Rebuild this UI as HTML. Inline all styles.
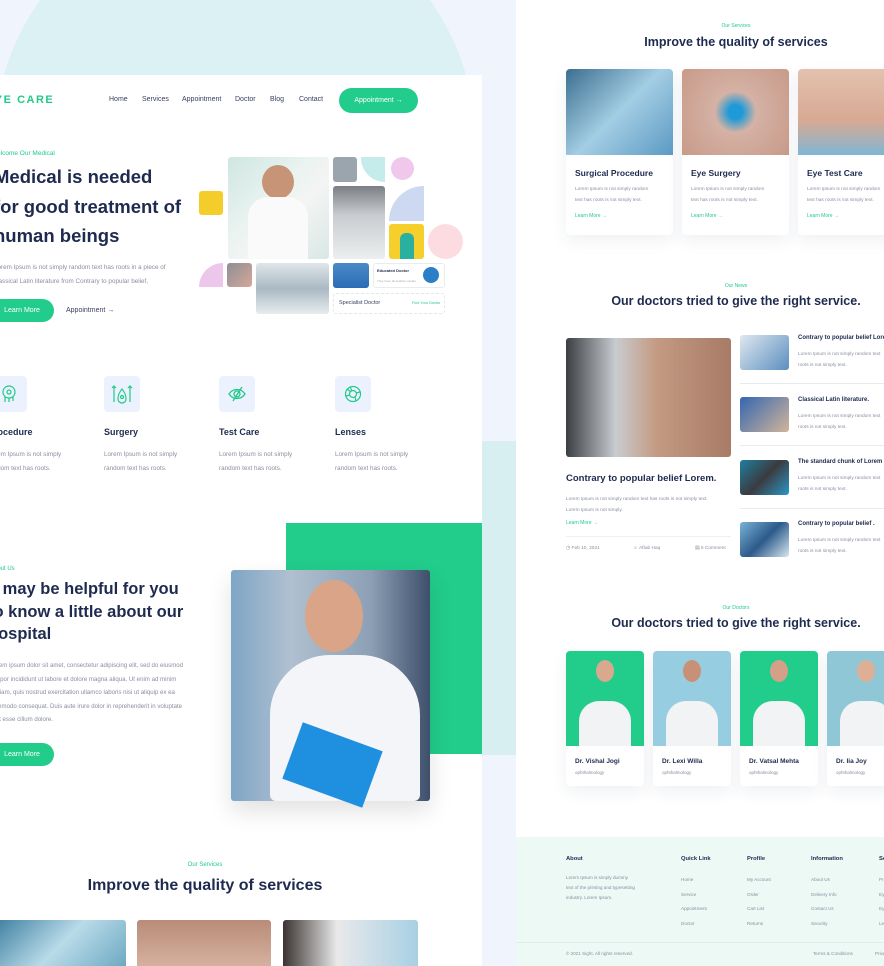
<!DOCTYPE html>
<html><head><meta charset="utf-8"><style>
*{margin:0;padding:0;box-sizing:border-box}
body{width:884px;height:966px;overflow:hidden;background:#f0f5fd;font-family:"Liberation Sans",sans-serif;position:relative;color:#1e2a4f}
.a{position:absolute;white-space:nowrap}
.g{color:#22c98a}
.nv{color:#1e2a4f;font-weight:bold}
.gr{color:#8a8f9f}
.btn{position:absolute;background:#22cc8a;color:#fff;border-radius:13px;font-size:7px;display:flex;align-items:center;justify-content:center}
.panel{position:absolute;background:#fff;overflow:hidden}
.ib{position:absolute;width:36px;height:36px;background:#ecf2fd;border-radius:4px}
.card{position:absolute;background:#fff;border-radius:4px;box-shadow:0 6px 16px rgba(30,50,100,.07);overflow:hidden}
.img{position:absolute;border-radius:3px}
</style></head><body>
<div class="a" style="left:-5px;top:-100px;width:480px;height:480px;border-radius:50%;background:#dcf1f4"></div>
<div class="a" style="left:482px;top:441px;width:34px;height:314px;background:#d7eff0"></div>

<!-- LEFT PANEL -->
<div class="panel" style="left:0;top:75px;width:482px;height:891px">
<div class="a" style="left:-14px;top:19px;font-size:11px;font-weight:bold;letter-spacing:1.5px;color:#22c98a">EYE CARE</div>
<div class="a" style="left:109px;top:21px;font-size:7px;color:#3a4060">Home</div>
<div class="a" style="left:142px;top:21px;font-size:7px;color:#3a4060">Services</div>
<div class="a" style="left:182px;top:21px;font-size:7px;color:#3a4060">Appointment</div>
<div class="a" style="left:235px;top:21px;font-size:7px;color:#3a4060">Doctor</div>
<div class="a" style="left:270px;top:21px;font-size:7px;color:#3a4060">Blog</div>
<div class="a" style="left:299px;top:21px;font-size:7px;color:#3a4060">Contact</div>
<div class="btn" style="left:339px;top:13px;width:79px;height:25px">Appointment &rarr;</div>

<div class="a g" style="left:-9px;top:75px;font-size:6.5px">Welcome Our Medical</div>
<div class="a nv" style="left:-6px;top:87px;font-size:18.5px;line-height:29.5px">Medical is needed<br>for good treatment of<br>human beings</div>
<div class="a gr" style="left:-6px;top:186px;font-size:6.3px;line-height:14px">Lorem Ipsum is not simply random text has roots in a piece of<br>classical Latin literature from Contrary to popular belief,</div>
<div class="btn" style="left:-10px;top:224px;width:64px;height:23px">Learn More</div>
<div class="a" style="left:66px;top:232px;font-size:7px;color:#3a4060">Appointment &rarr;</div>

<!-- collage -->
<div class="img" style="left:228px;top:82px;width:101px;height:102px;background:linear-gradient(135deg,#cfe6e2,#e9f3f0 40%,#f4f4f4 60%,#d8e8e4)"></div>
<div class="a" style="left:262px;top:90px;width:32px;height:34px;border-radius:50%;background:#c89478"></div>
<div class="a" style="left:248px;top:122px;width:60px;height:62px;border-radius:20px 20px 0 0;background:#fafafa"></div>
<div class="img" style="left:333px;top:82px;width:24px;height:25px;background:#9aa5ad"></div>
<div class="a" style="left:361px;top:82px;width:24px;height:25px;background:#c5ecea;border-radius:0 0 0 24px"></div>
<div class="a" style="left:391px;top:82px;width:23px;height:23px;background:#efc8ec;border-radius:50%"></div>
<div class="img" style="left:333px;top:111px;width:52px;height:73px;background:linear-gradient(180deg,#7b7f83,#c9ccd0 40%,#eceeef)"></div>
<div class="a" style="left:389px;top:111px;width:35px;height:35px;background:#cdd8f1;border-radius:35px 0 0 0"></div>
<div class="img" style="left:389px;top:149px;width:35px;height:35px;background:#f5d02c"></div>
<div class="a" style="left:400px;top:158px;width:14px;height:26px;background:#2ab0a0;border-radius:6px 6px 0 0"></div>
<div class="a" style="left:428px;top:149px;width:35px;height:35px;background:#fddce1;border-radius:50%"></div>
<div class="img" style="left:199px;top:116px;width:24px;height:24px;background:#f5cd2a"></div>
<div class="a" style="left:199px;top:188px;width:24px;height:24px;background:#edc6ec;border-radius:24px 0 0 0"></div>
<div class="img" style="left:227px;top:188px;width:25px;height:24px;background:linear-gradient(135deg,#8d8f95,#d7a79a)"></div>
<div class="img" style="left:256px;top:188px;width:73px;height:51px;background:linear-gradient(180deg,#dfe6ea,#aab9c4 50%,#e7ecee)"></div>
<div class="img" style="left:333px;top:188px;width:36px;height:25px;background:linear-gradient(180deg,#4a8ac8,#2a6db5)"></div>
<div class="img" style="left:373px;top:188px;width:72px;height:25px;border:1px solid #e8ecf2;background:#fff">
<div class="a" style="left:3px;top:4px;font-size:4px;font-weight:bold">Educated Doctor</div>
<div class="a" style="left:3px;top:15px;font-size:3px;color:#aaa">They have all studied outside</div>
<div class="a" style="left:49px;top:3px;width:16px;height:16px;border-radius:50%;background:#2b7fc6"></div></div>
<div class="img" style="left:333px;top:218px;width:112px;height:21px;border:1px dashed #e2e6ee;background:#fff">
<div class="a" style="left:5px;top:6px;font-size:5.5px;color:#3a4060">Specialist Doctor</div>
<div class="a g" style="left:78px;top:7px;font-size:3.8px">Find Your Doctor</div></div>

<!-- features -->
<div class="ib" style="left:-9px;top:301px"></div>
<div class="ib" style="left:104px;top:301px"></div>
<div class="ib" style="left:219px;top:301px"></div>
<div class="ib" style="left:335px;top:301px"></div>
<svg class="a" style="left:0;top:309px" width="20" height="20" fill="none" stroke="#22c98a" stroke-width="1.2"><circle cx="9" cy="8" r="6"/><circle cx="9" cy="8" r="2"/><path d="M5 13v5M9 14v4M13 13v4"/></svg>
<svg class="a" style="left:110px;top:309px" width="24" height="20" fill="none" stroke="#22c98a" stroke-width="1.2"><path d="M2 4l2-2 2 2M4 2v16M18 4l2-2 2 2M20 2v16M12 5c-4 5-4 8-4 10a4 4 0 008 0c0-2 0-5-4-10z"/><circle cx="12" cy="13" r="1.5"/></svg>
<svg class="a" style="left:227px;top:309px" width="20" height="20" fill="none" stroke="#22c98a" stroke-width="1.3"><path d="M2 10c4-6 12-6 16 0-4 6-12 6-16 0z"/><circle cx="10" cy="10" r="3"/><path d="M15 3L6 17"/></svg>
<svg class="a" style="left:343px;top:309px" width="20" height="20" fill="none" stroke="#22c98a" stroke-width="1.2"><circle cx="10" cy="10" r="7.5"/><circle cx="10" cy="10" r="3.5"/><path d="M7 3l2 4M17 8l-4 1M13 17l-1-4M3 12l4-1M4 5l4 3"/></svg>
<div class="a nv" style="left:-12px;top:352px;font-size:9px">Procedure</div>
<div class="a nv" style="left:104px;top:352px;font-size:9px">Surgery</div>
<div class="a nv" style="left:219px;top:352px;font-size:9px">Test Care</div>
<div class="a nv" style="left:335px;top:352px;font-size:9px">Lenses</div>
<div class="a gr" style="left:-12px;top:373px;font-size:6.3px;line-height:13.5px">Lorem Ipsum is not simply<br>random text has roots.</div>
<div class="a gr" style="left:104px;top:373px;font-size:6.3px;line-height:13.5px">Lorem Ipsum is not simply<br>random text has roots.</div>
<div class="a gr" style="left:219px;top:373px;font-size:6.3px;line-height:13.5px">Lorem Ipsum is not simply<br>random text has roots.</div>
<div class="a gr" style="left:335px;top:373px;font-size:6.3px;line-height:13.5px">Lorem Ipsum is not simply<br>random text has roots.</div>

<!-- about -->
<div class="a" style="left:286px;top:448px;width:196px;height:231px;background:#22cc8a"></div>
<div class="img" style="left:231px;top:495px;width:199px;height:231px;box-shadow:0 10px 24px rgba(0,0,0,.12);background:linear-gradient(90deg,#7fa5c6,#b0c0d0 30%,#8da0b5 70%,#3d4f6a)"></div>
<div class="a" style="left:270px;top:580px;width:150px;height:146px;border-radius:60px 60px 6px 6px;background:#f3f5f8"></div>
<div class="a" style="left:305px;top:505px;width:58px;height:72px;border-radius:50%;background:#d9a488"></div>
<div class="a" style="left:290px;top:660px;width:85px;height:60px;background:#1f8fe0;transform:rotate(20deg)"></div>
<div class="a g" style="left:-10px;top:491px;font-size:6px">About Us</div>
<div class="a nv" style="left:-12px;top:503px;font-size:16.5px;line-height:22.5px">It may be helpful for you<br>to know a little about our<br>hospital</div>
<div class="a gr" style="left:-10px;top:584px;font-size:6.1px;line-height:13.5px">Lorem ipsum dolor sit amet, consectetur adipiscing elit, sed do eiusmod<br>tempor incididunt ut labore et dolore magna aliqua. Ut enim ad minim<br>veniam, quis nostrud exercitation ullamco laboris nisi ut aliquip ex ea<br>commodo consequat. Duis aute irure dolor in reprehenderit in voluptate<br>velit esse cillum dolore.</div>
<div class="btn" style="left:-10px;top:668px;width:64px;height:23px">Learn More</div>

<div class="a g" style="left:0;width:410px;text-align:center;top:787px;font-size:6px">Our Services</div>
<div class="a nv" style="left:0;width:410px;text-align:center;top:802px;font-size:16px">Improve the quality of services</div>
<div class="img" style="left:-5px;top:845px;width:131px;height:50px;background:linear-gradient(135deg,#3d7ea0,#b9dbe8 50%,#6aa7c0)"></div>
<div class="img" style="left:137px;top:845px;width:134px;height:50px;background:linear-gradient(180deg,#b98c78,#d8b3a2)"></div>
<div class="img" style="left:283px;top:845px;width:135px;height:50px;background:linear-gradient(90deg,#3a3330,#e9e9ea 40%,#a7d0e4)"></div>
</div>

<!-- RIGHT PANEL -->
<div class="panel" style="left:516px;top:0;width:368px;height:966px">
<div class="a g" style="left:0;width:440px;text-align:center;top:23px;font-size:5px">Our Services</div>
<div class="a nv" style="left:0;width:440px;text-align:center;top:35px;font-size:12.5px">Improve the quality of services</div>

<div class="card" style="left:50px;top:69px;width:107px;height:166px"><div class="a" style="left:0;top:0;width:107px;height:86px;background:linear-gradient(135deg,#3b6f90,#a3cde3 50%,#5c9ac4)"></div>
<div class="a nv" style="left:9px;top:99px;font-size:8.5px">Surgical Procedure</div>
<div class="a gr" style="left:9px;top:116px;font-size:4.8px;line-height:10.5px">Lorem Ipsum is not simply random<br>text has roots is not simply text.</div>
<div class="a g" style="left:9px;top:144px;font-size:5px">Learn More &rarr;</div></div>
<div class="card" style="left:166px;top:69px;width:107px;height:166px"><div class="a" style="left:0;top:0;width:107px;height:86px;background:radial-gradient(circle at 50% 50%,#1e9ad8 10%,#d4b2a5 30%,#c89a88)"></div>
<div class="a nv" style="left:9px;top:99px;font-size:8.5px">Eye Surgery</div>
<div class="a gr" style="left:9px;top:116px;font-size:4.8px;line-height:10.5px">Lorem Ipsum is not simply random<br>text has roots is not simply text.</div>
<div class="a g" style="left:9px;top:144px;font-size:5px">Learn More &rarr;</div></div>
<div class="card" style="left:282px;top:69px;width:107px;height:166px"><div class="a" style="left:0;top:0;width:107px;height:86px;background:linear-gradient(180deg,#e2c2ae,#d8a993 60%,#7fb6d4)"></div>
<div class="a nv" style="left:9px;top:99px;font-size:8.5px">Eye Test Care</div>
<div class="a gr" style="left:9px;top:116px;font-size:4.8px;line-height:10.5px">Lorem Ipsum is not simply random<br>text has roots is not simply text.</div>
<div class="a g" style="left:9px;top:144px;font-size:5px">Learn More &rarr;</div></div>

<div class="a g" style="left:0;width:440px;text-align:center;top:283px;font-size:5px">Our News</div>
<div class="a nv" style="left:0;width:440px;text-align:center;top:294px;font-size:12.5px">Our doctors tried to give the right service.</div>
<div class="img" style="left:50px;top:338px;width:165px;height:119px;background:linear-gradient(90deg,#3b3f44,#c8ccd0 30%,#c49a82 55%,#a77b66)"></div>
<div class="a nv" style="left:50px;top:473px;font-size:9.5px">Contrary to popular belief Lorem.</div>
<div class="a gr" style="left:50px;top:495px;font-size:4.8px;line-height:10.5px">Lorem Ipsum is not simply random text has roots is not simply text.<br>Lorem Ipsum is not simply.</div>
<div class="a g" style="left:50px;top:520px;font-size:5px">Learn More &rarr;</div>
<div class="a" style="left:50px;top:536px;width:165px;height:1px;background:#edf0f4"></div>
<div class="a gr" style="left:50px;top:546px;font-size:4.8px">&#9719; Feb 10, 2021</div>
<div class="a gr" style="left:117px;top:546px;font-size:4.8px">&#9786; Aftab Haq</div>
<div class="a gr" style="left:179px;top:546px;font-size:4.8px">&#9636; 5 Comment</div>

<div class="img" style="left:224px;top:335px;width:49px;height:35px;background:linear-gradient(135deg,#dfe8ef,#5b8ec0)"></div>
<div class="img" style="left:224px;top:397px;width:49px;height:35px;background:linear-gradient(135deg,#3466b0,#d1b59a)"></div>
<div class="img" style="left:224px;top:460px;width:49px;height:35px;background:linear-gradient(135deg,#1e7fa0,#3b3b40 50%,#2a98c7)"></div>
<div class="img" style="left:224px;top:522px;width:49px;height:35px;background:linear-gradient(135deg,#7ab3d6,#2c5a8a 50%,#d8e7f0)"></div>
<div class="a nv" style="left:282px;top:335px;font-size:6px">Contrary to popular belief Lorem</div>
<div class="a nv" style="left:282px;top:397px;font-size:6px">Classical Latin literature.</div>
<div class="a nv" style="left:282px;top:459px;font-size:6px">The standard chunk of Lorem</div>
<div class="a nv" style="left:282px;top:521px;font-size:6px">Contrary to popular belief .</div>
<div class="a gr" style="left:282px;top:350px;font-size:4.8px;line-height:10.5px">Lorem Ipsum is not simply random text<br>roots is not simply text.</div>
<div class="a gr" style="left:282px;top:412px;font-size:4.8px;line-height:10.5px">Lorem Ipsum is not simply random text<br>roots is not simply text.</div>
<div class="a gr" style="left:282px;top:474px;font-size:4.8px;line-height:10.5px">Lorem Ipsum is not simply random text<br>roots is not simply text.</div>
<div class="a gr" style="left:282px;top:536px;font-size:4.8px;line-height:10.5px">Lorem Ipsum is not simply random text<br>roots is not simply text.</div>
<div class="a" style="left:224px;top:383px;width:150px;height:1px;background:#e6ebf2"></div>
<div class="a" style="left:224px;top:445px;width:150px;height:1px;background:#e6ebf2"></div>
<div class="a" style="left:224px;top:508px;width:150px;height:1px;background:#e6ebf2"></div>

<div class="a g" style="left:0;width:440px;text-align:center;top:605px;font-size:5px">Our Doctors</div>
<div class="a nv" style="left:0;width:440px;text-align:center;top:616px;font-size:12.5px">Our doctors tried to give the right service.</div>
<div class="card" style="left:50px;top:651px;width:78px;height:135px"><div class="a" style="left:0;top:0;width:78px;height:95px;background:#22cc8a"></div><div class="a" style="left:13px;top:50px;width:52px;height:45px;border-radius:20px 20px 0 0;background:#f2f3f5"></div><div class="a" style="left:30px;top:9px;width:18px;height:22px;border-radius:50%;background:#d9a98f"></div><div class="a nv" style="left:9px;top:107px;font-size:6.5px">Dr. Vishal Jogi</div><div class="a gr" style="left:9px;top:119px;font-size:4.5px">ophthalmology</div></div>
<div class="card" style="left:137px;top:651px;width:78px;height:135px"><div class="a" style="left:0;top:0;width:78px;height:95px;background:#97cde0"></div><div class="a" style="left:13px;top:50px;width:52px;height:45px;border-radius:20px 20px 0 0;background:#f2f3f5"></div><div class="a" style="left:30px;top:9px;width:18px;height:22px;border-radius:50%;background:#c99078"></div><div class="a nv" style="left:9px;top:107px;font-size:6.5px">Dr. Lexi Willa</div><div class="a gr" style="left:9px;top:119px;font-size:4.5px">ophthalmology</div></div>
<div class="card" style="left:224px;top:651px;width:78px;height:135px"><div class="a" style="left:0;top:0;width:78px;height:95px;background:#22cc8a"></div><div class="a" style="left:13px;top:50px;width:52px;height:45px;border-radius:20px 20px 0 0;background:#f2f3f5"></div><div class="a" style="left:30px;top:9px;width:18px;height:22px;border-radius:50%;background:#d4a087"></div><div class="a nv" style="left:9px;top:107px;font-size:6.5px">Dr. Vatsal Mehta</div><div class="a gr" style="left:9px;top:119px;font-size:4.5px">ophthalmology</div></div>
<div class="card" style="left:311px;top:651px;width:78px;height:135px"><div class="a" style="left:0;top:0;width:78px;height:95px;background:#8fc7d6"></div><div class="a" style="left:13px;top:50px;width:52px;height:45px;border-radius:20px 20px 0 0;background:#f2f3f5"></div><div class="a" style="left:30px;top:9px;width:18px;height:22px;border-radius:50%;background:#dcaf96"></div><div class="a nv" style="left:9px;top:107px;font-size:6.5px">Dr. Iia Joy</div><div class="a gr" style="left:9px;top:119px;font-size:4.5px">ophthalmology</div></div>

<div class="a" style="left:0;top:837px;width:368px;height:129px;background:#ecf9f5"></div>
<div class="a nv" style="left:50px;top:856px;font-size:5.8px">About</div>
<div class="a nv" style="left:165px;top:856px;font-size:5.8px">Quick Link</div>
<div class="a nv" style="left:231px;top:856px;font-size:5.8px">Profile</div>
<div class="a nv" style="left:295px;top:856px;font-size:5.8px">Information</div>
<div class="a nv" style="left:363px;top:856px;font-size:5.8px">Services</div>
<div class="a gr" style="left:50px;top:873px;font-size:4.6px;line-height:10px">Lorem Ipsum is simply dummy<br>text of the printing and typesetting<br>industry. Lorem Ipsum.</div>
<div class="a gr" style="left:165px;top:873px;font-size:4.6px;line-height:14.6px">Home<br>Service<br>Appointment<br>Doctor</div>
<div class="a gr" style="left:231px;top:873px;font-size:4.6px;line-height:14.6px">My Account<br>Order<br>Cart List<br>Returns</div>
<div class="a gr" style="left:295px;top:873px;font-size:4.6px;line-height:14.6px">About Us<br>Delivery Info<br>Contact Us<br>Security</div>
<div class="a gr" style="left:363px;top:873px;font-size:4.6px;line-height:14.6px">Pr<br>Ey<br>Ey<br>Le</div>
<div class="a" style="left:0;top:942px;width:368px;height:1px;background:#dcefe8"></div>
<div class="a gr" style="left:50px;top:951px;font-size:4.6px">© 2021 Sight. All rights reserved.</div>
<div class="a gr" style="left:297px;top:951px;font-size:4.6px">Terms &amp; Conditions</div>
<div class="a gr" style="left:359px;top:951px;font-size:4.6px">Privacy</div>
</div>
</body></html>
